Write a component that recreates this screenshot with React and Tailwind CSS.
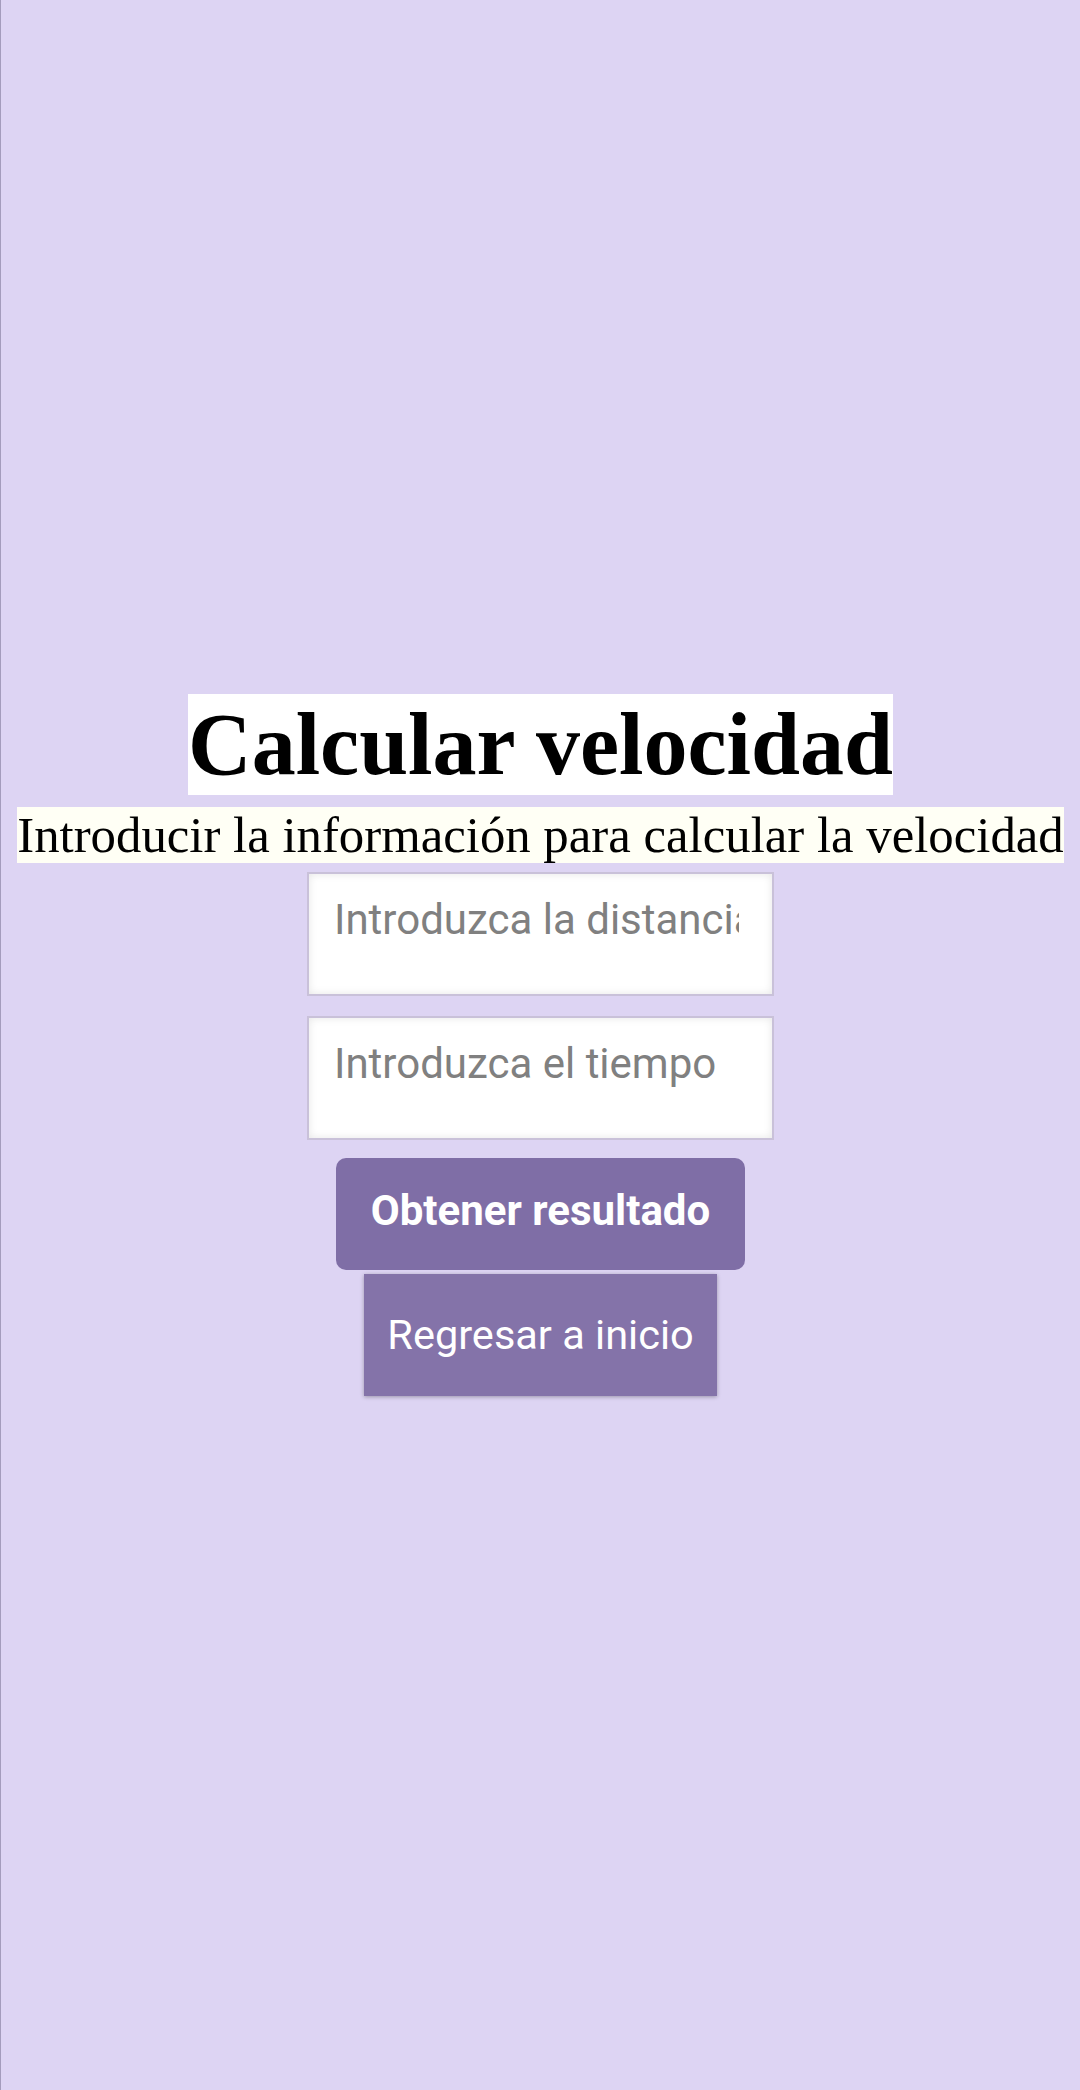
import React, { useState } from 'react';

export default function App() {
  const [distancia, setDistancia] = useState('');
  const [tiempo, setTiempo] = useState('');

  return (
    <div className="min-h-[2090px] w-full bg-[#ddd4f3] border-l border-[#a49cbc] flex flex-col items-center justify-center">
      <h1 className="bg-white text-black font-bold text-[88px] leading-[101px] font-['Liberation_Serif',serif]">
        Calcular velocidad
      </h1>
      <p className="mt-[12px] bg-[#fffff5] text-black text-[50.8px] leading-[56px] whitespace-nowrap font-['Liberation_Serif',serif]">
        Introducir la información para calcular la velocidad
      </p>

      <input
        type="number"
        value={distancia}
        onChange={e => setDistancia(e.target.value)}
        placeholder="Introduzca la distancia"
        className="mt-[9px] w-[467px] h-[124px] bg-white border-2 border-[#c9c1d9] pl-[25px] pr-[18px] pt-[21px] pb-[50px] text-[42px] leading-[49px] text-black placeholder:text-[#808080] shadow-[inset_0_0_8px_rgba(0,0,0,0.10)] outline-none font-['Roboto',sans-serif]"
      />
      <input
        type="number"
        value={tiempo}
        onChange={e => setTiempo(e.target.value)}
        placeholder="Introduzca el tiempo"
        className="mt-[20px] w-[467px] h-[124px] bg-white border-2 border-[#c9c1d9] pl-[25px] pr-[18px] pt-[21px] pb-[50px] text-[42px] leading-[49px] text-black placeholder:text-[#808080] shadow-[inset_0_0_8px_rgba(0,0,0,0.10)] outline-none font-['Roboto',sans-serif]"
      />

      <button
        type="button"
        className="mt-[18px] w-[409px] h-[112px] pb-[8px] rounded-[10px] bg-[#7f6ea6] text-white font-bold text-[42px] font-['Roboto',sans-serif]"
      >
        Obtener resultado
      </button>
      <button
        type="button"
        className="mt-[4px] w-[353px] h-[122px] bg-[#8473a9] text-white text-[41.5px] shadow-[0_1px_4px_rgba(0,0,0,0.3)] font-['Roboto',sans-serif]"
      >
        Regresar a inicio
      </button>
    </div>
  );
}
